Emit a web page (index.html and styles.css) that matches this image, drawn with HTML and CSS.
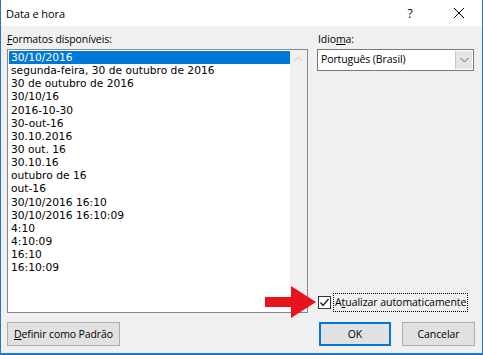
FILE: index.html
```html
<!DOCTYPE html>
<html lang="pt-BR">
<head>
<meta charset="utf-8">
<title>Data e hora</title>
<link rel="stylesheet" href="styles.css">
</head>
<body>
<div class="window">
  <div class="titlebar">
    <span class="title">Data e hora</span>
    <span class="help">?</span>
    <span class="close">
      <svg width="12" height="12" viewBox="0 0 12 12"><path d="M1 1L11 11M11 1L1 11" stroke="#000" stroke-width="1"/></svg>
    </span>
  </div>
  <div class="content">
    <div class="main">
      <div class="col-left">
        <div class="label"><u>F</u>ormatos disponíveis:</div>
        <div class="listbox">
          <ul class="items">
            <li class="selected">30/10/2016</li>
            <li>segunda-feira, 30 de outubro de 2016</li>
            <li>30 de outubro de 2016</li>
            <li>30/10/16</li>
            <li>2016-10-30</li>
            <li>30-out-16</li>
            <li>30.10.2016</li>
            <li>30 out. 16</li>
            <li>30.10.16</li>
            <li>outubro de 16</li>
            <li>out-16</li>
            <li>30/10/2016 16:10</li>
            <li>30/10/2016 16:10:09</li>
            <li>4:10</li>
            <li>4:10:09</li>
            <li>16:10</li>
            <li>16:10:09</li>
          </ul>
          <div class="scrollbar">
            <svg width="9" height="6" viewBox="0 0 9 6"><path d="M0.5 5L4.5 1L8.5 5" fill="none" stroke="#c2c2c2" stroke-width="1"/></svg>
          </div>
        </div>
      </div>
      <div class="col-right">
        <div class="label">Idio<u>m</u>a:</div>
        <div class="combo">
          <span class="combo-text">Português (Brasil)</span>
          <span class="combo-btn">
            <svg width="9" height="6" viewBox="0 0 9 6"><path d="M0.5 1L4.5 5L8.5 1" fill="none" stroke="#606060" stroke-width="1"/></svg>
          </span>
        </div>
        <div class="spacer"></div>
        <div class="check-row">
          <span class="checkbox">
            <svg width="11" height="11" viewBox="0 0 11 11"><path d="M1.5 5.5L4 8.5L9.5 2" fill="none" stroke="#222" stroke-width="1.4"/></svg>
          </span>
          <span class="check-label">A<u>t</u>ualizar automaticamente</span>
        </div>
      </div>
    </div>
    <div class="buttons">
      <button class="btn btn-default-set"><u>D</u>efinir como Padrão</button>
      <div class="btn-group">
        <button class="btn btn-ok">OK</button>
        <button class="btn">Cancelar</button>
      </div>
    </div>
  </div>
  <svg class="arrow" width="52" height="32" viewBox="0 0 52 32">
    <path d="M0 11H26V0L51 16L26 32V21H0Z" fill="#e8141b"/>
  </svg>
</div>
</body>
</html>
```
FILE: styles.css
```css
* { box-sizing: border-box; }
html, body { margin: 0; padding: 0; background: #fff; }
body {
  font-family: "Liberation Sans", Arial, sans-serif;
  font-size: 12px;
  color: #000;
}
.window {
  position: relative;
  width: 483px;
  height: 355px;
  border: 1px solid #2b73c8;
  border-top: none;
  border-bottom-width: 2px;
  display: flex;
  flex-direction: column;
  background: #f0f0f0;
}
.titlebar {
  height: 26px;
  background: #fff;
  display: flex;
  align-items: center;
  padding-left: 5px;
  font-family: "Open Sans", "Liberation Sans", sans-serif;
  font-size: 11px;
}
.title { flex: 1; letter-spacing: -0.1px; }
.help { width: 52px; text-align: center; font-size: 12px; }
.close { width: 46px; display: flex; justify-content: center; }
.content {
  flex: 1;
  display: flex;
  flex-direction: column;
  padding: 6px 7px 7px 6px;
}
.main {
  flex: 1;
  display: flex;
  gap: 9px;
}
.label {
  font-family: "Open Sans", "Liberation Sans", sans-serif;
  font-size: 10.5px;
  height: 17px;
  line-height: 15px;
  letter-spacing: -0.1px;
  white-space: nowrap;
}
.col-left { width: 301px; display: flex; flex-direction: column; }
.col-right { width: 157px; display: flex; flex-direction: column; padding-left: 1px; }
.listbox {
  height: 264px;
  border: 1px solid #828790;
  background: #fff;
  display: flex;
}
.items {
  list-style: none;
  margin: 0;
  padding: 1px 0 0 1px;
  flex: 1;
  font-family: "DejaVu Sans", sans-serif;
  font-size: 10.7px;
}
.items li {
  height: 13.15px;
  line-height: 13px;
  padding-left: 2px;
  white-space: nowrap;
}
.items li.selected {
  background: #0078d7;
  color: #fff;
}
.scrollbar {
  width: 17px;
  background: #f0f0f0;
  display: flex;
  justify-content: center;
  align-items: flex-start;
  padding-top: 6px;
}
.combo {
  height: 22px;
  border: 1px solid #7a7a7a;
  background: #fff;
  display: flex;
  align-items: stretch;
  margin-left: -1px;
}
.combo-text {
  flex: 1;
  font-family: "Open Sans", "Liberation Sans", sans-serif;
  font-size: 10.5px;
  letter-spacing: -0.1px;
  line-height: 19px;
  padding-left: 3px;
  white-space: nowrap;
}
.combo-btn {
  width: 17px;
  margin: 1px;
  background: #e5e5e5;
  border-left: 1px solid #c8c8c8;
  display: flex;
  align-items: center;
  justify-content: center;
}
.spacer { flex: 1; }
.check-row {
  display: flex;
  align-items: center;
  height: 20px;
  margin-bottom: 1px;
  white-space: nowrap;
}
.checkbox {
  width: 13px;
  height: 13px;
  flex: none;
  border: 1px solid #333;
  background: #fff;
  display: flex;
  align-items: center;
  justify-content: center;
  margin-right: 2px;
}
.check-label {
  font-family: "Open Sans", "Liberation Sans", sans-serif;
  font-size: 10.5px;
  letter-spacing: -0.05px;
  border: 1px dotted #000;
  padding: 0 1px;
  line-height: 17px;
  white-space: nowrap;
}
.buttons {
  display: flex;
  justify-content: space-between;
  padding-top: 9px;
}
.btn-group { display: flex; gap: 11px; }
.btn {
  font-family: "Open Sans", "Liberation Sans", sans-serif;
  font-size: 10.5px;
  letter-spacing: -0.1px;
  height: 24px;
  width: 73px;
  border: 1px solid #adadad;
  background: #e1e1e1;
  color: #000;
  padding: 0;
  margin: 0;
}
.btn-default-set { width: 113px; }
.btn-ok {
  border: 2px solid #0078d7;
  width: 72px;
}
.arrow {
  position: absolute;
  left: 264px;
  top: 286px;
}
```
